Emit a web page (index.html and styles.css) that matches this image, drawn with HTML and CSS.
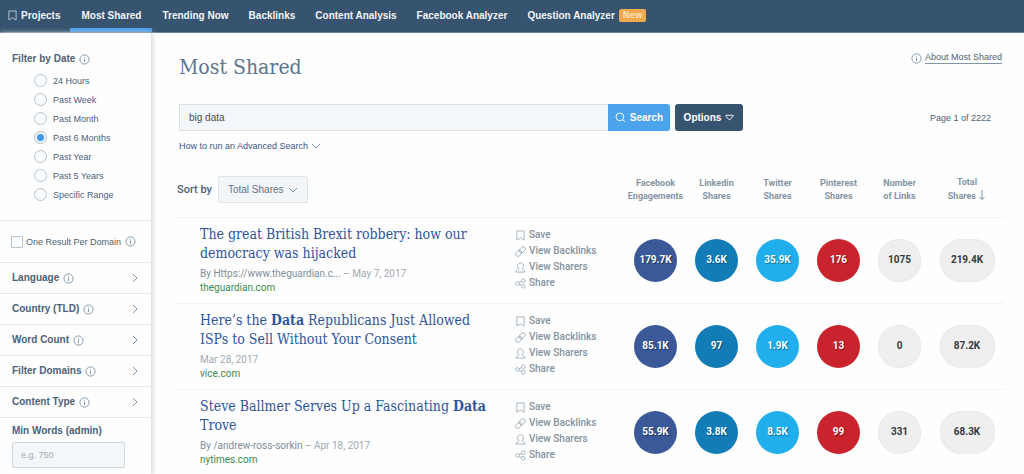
FILE: index.html
```html
<!DOCTYPE html>
<html lang="en">
<head>
<meta charset="utf-8">
<meta name="viewport" content="width=device-width, initial-scale=1">
<title>Most Shared</title>
<link rel="stylesheet" href="styles.css">
</head>
<body>
<svg class="sprite" aria-hidden="true">
  <symbol id="bookmark" viewBox="0 0 10 12"><path d="M1 1h8v10L5 8.500 1 11z"/></symbol>
  <symbol id="info" viewBox="0 0 12 12"><circle cx="6" cy="6" r="5"/><path d="M6 5v4M6 3v1"/></symbol>
  <symbol id="right" viewBox="0 0 6 10"><path d="M1 1l4 4-4 4"/></symbol>
  <symbol id="down" viewBox="0 0 10 6"><path d="M1 1l4 4 4-4"/></symbol>
  <symbol id="glass" viewBox="0 0 12 12"><circle cx="5.300" cy="5.300" r="4.200"/><path d="M8.500 8.500l2.500 2.500"/></symbol>
  <symbol id="triangle" viewBox="0 0 10 7"><path d="M1 1h8v1L5.500 6h-1L1 2z"/></symbol>
  <symbol id="arrow" viewBox="0 0 8 12"><path d="M4 1v9.500M1.500 8L4 10.500 6.500 8"/></symbol>
  <symbol id="chain" viewBox="0 0 12 12"><g transform="rotate(-45 6 6)"><rect x="-.5" y="3.600" width="7.500" height="4.800" rx="2.400"/><rect x="5" y="3.600" width="7.500" height="4.800" rx="2.400"/></g></symbol>
  <symbol id="person" viewBox="0 0 12 12"><path d="M4.500 7.500C1.800 5.300 2.200 1 6 1s4.200 4.300 1.500 6.500c0 1 3.500.8 3.500 3.500H1c0-2.700 3.500-2.500 3.500-3.500z"/></symbol>
  <symbol id="share" viewBox="0 0 12 12"><circle cx="2.800" cy="6" r="2"/><circle cx="9" cy="3" r="2"/><circle cx="9" cy="9" r="2"/><path d="M4.600 5.100l2.600-1.200M4.600 6.900l2.600 1.200"/></symbol>
</svg>

<nav class="nav">
  <a class="nav-item" href="#"><svg class="icon icon-mark"><use href="#bookmark"/></svg>Projects</a>
  <a class="nav-item active" href="#" aria-current="page">Most Shared</a>
  <a class="nav-item" href="#">Trending Now</a>
  <a class="nav-item" href="#">Backlinks</a>
  <a class="nav-item" href="#">Content Analysis</a>
  <a class="nav-item" href="#">Facebook Analyzer</a>
  <a class="nav-item" href="#">Question Analyzer <span class="new">New</span></a>
</nav>

<div class="layout">
  <aside class="sidebar">
    <fieldset class="dates">
      <legend class="heading">Filter by Date <svg class="icon"><use href="#info"/></svg></legend>
      <label class="choice"><input type="radio" name="date">24 Hours</label>
      <label class="choice"><input type="radio" name="date">Past Week</label>
      <label class="choice"><input type="radio" name="date">Past Month</label>
      <label class="choice"><input type="radio" name="date" checked>Past 6 Months</label>
      <label class="choice"><input type="radio" name="date">Past Year</label>
      <label class="choice"><input type="radio" name="date">Past 5 Years</label>
      <label class="choice"><input type="radio" name="date">Specific Range</label>
    </fieldset>
    <div class="single"><label class="check"><input type="checkbox">One Result Per Domain</label><svg class="icon"><use href="#info"/></svg></div>
    <button class="filter" type="button">Language <svg class="icon"><use href="#info"/></svg><svg class="icon chevron"><use href="#right"/></svg></button>
    <button class="filter" type="button">Country (TLD) <svg class="icon"><use href="#info"/></svg><svg class="icon chevron"><use href="#right"/></svg></button>
    <button class="filter" type="button">Word Count <svg class="icon"><use href="#info"/></svg><svg class="icon chevron"><use href="#right"/></svg></button>
    <button class="filter" type="button">Filter Domains <svg class="icon"><use href="#info"/></svg><svg class="icon chevron"><use href="#right"/></svg></button>
    <button class="filter" type="button">Content Type <svg class="icon"><use href="#info"/></svg><svg class="icon chevron"><use href="#right"/></svg></button>
    <div class="words">
      <label class="heading" for="min-words">Min Words (admin)</label>
      <input class="words-input" id="min-words" type="text" placeholder="e.g. 750">
    </div>
  </aside>

  <main class="main">
    <header class="top">
      <h1 class="title">Most Shared</h1>
      <a class="about" href="#"><svg class="icon"><use href="#info"/></svg><span class="about-text">About Most Shared</span></a>
    </header>
    <div class="tools">
      <form class="search">
        <input class="query" type="text" value="big data" aria-label="Search">
        <button class="go" type="button"><svg class="icon"><use href="#glass"/></svg>Search</button>
        <button class="options" type="button">Options <svg class="icon icon-triangle"><use href="#triangle"/></svg></button>
      </form>
      <span class="page">Page 1 of 2222</span>
    </div>
    <a class="advanced" href="#">How to run an Advanced Search <svg class="icon icon-down"><use href="#down"/></svg></a>

    <table class="results">
      <colgroup><col><col class="col-actions"><col class="col-count" span="5"><col class="col-total"></colgroup>
      <thead>
        <tr>
          <th colspan="2"><div class="sort"><label for="sort">Sort by</label><span class="select"><select id="sort"><option>Total Shares</option></select><svg class="icon icon-down"><use href="#down"/></svg></span></div></th>
          <th>Facebook<br>Engagements</th><th>Linkedin<br>Shares</th><th>Twitter<br>Shares</th><th>Pinterest<br>Shares</th><th>Number<br>of Links</th>
          <th>Total<br>Shares <svg class="icon icon-arrow"><use href="#arrow"/></svg></th>
        </tr>
      </thead>
      <tbody>
        <tr>
          <td class="article"><a class="headline" href="#">The great British Brexit robbery: how our democracy was hijacked</a><div class="meta"><span class="author">By Https://www.theguardian.c...</span> – May 7, 2017</div><a class="domain" href="#">theguardian.com</a></td>
          <td class="actions"><div class="action-list"><button type="button"><svg class="icon"><use href="#bookmark"/></svg>Save</button><button type="button"><svg class="icon"><use href="#chain"/></svg>View Backlinks</button><button type="button"><svg class="icon"><use href="#person"/></svg>View Sharers</button><button type="button"><svg class="icon"><use href="#share"/></svg>Share</button></div></td>
          <td><span class="count facebook">179.7K</span></td><td><span class="count linkedin">3.6K</span></td><td><span class="count twitter">35.9K</span></td><td><span class="count pinterest">176</span></td><td><span class="count">1075</span></td><td><span class="count total">219.4K</span></td>
        </tr>
        <tr>
          <td class="article"><a class="headline" href="#">Here’s the <b>Data</b> Republicans Just Allowed ISPs to Sell Without Your Consent</a><div class="meta">Mar 28, 2017</div><a class="domain" href="#">vice.com</a></td>
          <td class="actions"><div class="action-list"><button type="button"><svg class="icon"><use href="#bookmark"/></svg>Save</button><button type="button"><svg class="icon"><use href="#chain"/></svg>View Backlinks</button><button type="button"><svg class="icon"><use href="#person"/></svg>View Sharers</button><button type="button"><svg class="icon"><use href="#share"/></svg>Share</button></div></td>
          <td><span class="count facebook">85.1K</span></td><td><span class="count linkedin">97</span></td><td><span class="count twitter">1.9K</span></td><td><span class="count pinterest">13</span></td><td><span class="count">0</span></td><td><span class="count total">87.2K</span></td>
        </tr>
        <tr>
          <td class="article"><a class="headline" href="#">Steve Ballmer Serves Up a Fascinating <b>Data</b> Trove</a><div class="meta"><span class="author">By /andrew-ross-sorkin</span> – Apr 18, 2017</div><a class="domain" href="#">nytimes.com</a></td>
          <td class="actions"><div class="action-list"><button type="button"><svg class="icon"><use href="#bookmark"/></svg>Save</button><button type="button"><svg class="icon"><use href="#chain"/></svg>View Backlinks</button><button type="button"><svg class="icon"><use href="#person"/></svg>View Sharers</button><button type="button"><svg class="icon"><use href="#share"/></svg>Share</button></div></td>
          <td><span class="count facebook">55.9K</span></td><td><span class="count linkedin">3.8K</span></td><td><span class="count twitter">8.5K</span></td><td><span class="count pinterest">99</span></td><td><span class="count">331</span></td><td><span class="count total">68.3K</span></td>
        </tr>
      </tbody>
    </table>
  </main>
</div>
</body>
</html>
```

FILE: styles.css
```css
* { box-sizing: border-box; }
body {
  margin: 0;
  min-height: 100vh;
  display: flex;
  flex-direction: column;
  background: #fefefe;
  color: #4b6178;
  font: 10px/14px "Liberation Sans", Arial, sans-serif;
}
a { color: inherit; text-decoration: none; }
button, input, select { font: inherit; color: inherit; margin: 0; }
button { border: 0; padding: 0; background: none; cursor: pointer; }
.sprite { position: absolute; width: 0; height: 0; }
.icon { width: 11px; height: 11px; flex: none; fill: none; stroke: #7d93a8; stroke-width: 1; }
.icon-down { width: 10px; height: 6px; }

/* Top navigation */
.nav { display: flex; height: 33px; padding-left: 8px; background: #36546f; border-bottom: 1px solid #6f8497; color: #f2f5f7; font-weight: bold; }
.nav-item { display: flex; align-items: center; gap: 4px; padding: 0 10px; border-bottom: 4px solid transparent; border-top: 3px solid transparent; white-space: nowrap; }
.nav-item:first-child { padding-left: 0; }
.nav-item.active { padding: 0 11px; border-bottom-color: #4a9fe8; }
.nav .icon-mark { width: 9px; stroke: #c3ced8; }
.new { padding: 0 4px; border-radius: 2px; background: #efa951; color: #fff3dc; font: 9px/13px "DejaVu Sans", sans-serif; }

.layout { display: flex; flex: 1; }

/* Filters */
.sidebar { flex: none; width: 151px; box-shadow: 1px 0 5px #c9ced3; }
.heading { font-weight: bold; }
.dates { margin: 0; padding: 19px 0 16px 12px; border: 0; border-bottom: 1px solid #e6e9ec; }
.dates .heading { display: flex; align-items: center; gap: 4px; float: left; width: 100%; padding: 0; margin-bottom: 5px; }
.choice { display: flex; clear: both; align-items: center; height: 19px; padding-left: 22px; gap: 6px; font-size: 9px; }
.choice input { appearance: none; width: 13px; height: 13px; border: 1px solid #b3c2cf; border-radius: 50%; background: #fbfcfd; }
.choice input:checked { background: radial-gradient(circle, #3f9bea 3px, #eef4fa 4px); }
.single { display: flex; align-items: center; gap: 4px; height: 42px; padding-left: 11px; border-bottom: 1px solid #e6e9ec; font-size: 9px; white-space: nowrap; }
.check { display: flex; align-items: center; gap: 3px; }
.check input { appearance: none; width: 12px; height: 12px; border: 1px solid #b3c2cf; border-radius: 1px; background: #fff; }
.filter { display: flex; align-items: center; gap: 4px; width: 100%; height: 31px; padding: 0 13px 0 12px; border-bottom: 1px solid #e6e9ec; font-weight: bold; }
.filter .chevron { width: 6px; height: 10px; margin-left: auto; }
.words { display: flex; flex-direction: column; gap: 4px; padding: 6px 26px 5px 12px; }
.words-input { width: 100%; height: 26px; padding: 0 8px; border: 1px solid #cfd6dc; border-radius: 2px; background: #f4f7fa; font-size: 9px; }
.words-input::placeholder { color: #a3acb4; }

/* Search */
.main { flex: 1; min-width: 0; padding: 17px 20px 0 26px; }
.top { display: flex; justify-content: space-between; padding: 0 2px; }
.title { margin: 0; color: #5c7590; font: 300 21px/34px "Roboto Slab", "DejaVu Serif Condensed", "DejaVu Serif", serif; }
.about { display: flex; align-items: center; gap: 3px; height: 16px; font-size: 9px; }
.about-text { border-bottom: 1px solid #8296a9; line-height: 11px; }
.tools { display: flex; align-items: center; justify-content: space-between; margin-top: 20px; padding: 0 13px 0 2px; }
.search { display: flex; flex: 0 1 564px; height: 27px; }
.query { flex: 1; min-width: 0; padding: 0 9px; border: 1px solid #dce2e4; border-right: 0; background: #f3f7fb; color: #444f59; }
.go, .options { display: flex; align-items: center; justify-content: center; gap: 4px; border-radius: 3px; background: #36546f; color: #fff; font-weight: bold; }
.go { width: 62px; border-radius: 0 3px 3px 0; background: #4aa3eb; }
.go .icon, .options .icon { stroke: #fff; }
.options { width: 68px; margin-left: 5px; }
.icon-triangle { width: 9px; height: 7px; }
.page { font-size: 9px; }
.advanced { display: flex; align-items: center; gap: 3px; width: fit-content; margin: 8px 0 0 2px; color: #3b5585; font-size: 9px; }

/* Results */
.results { width: 100%; border-collapse: collapse; table-layout: fixed; font-family: Roboto, sans-serif; }
.col-actions { width: 110px; }
.col-count { width: 61px; }
.col-total { width: 74px; }
.results th { height: 64px; padding: 10px 0 0; color: #8594a3; font-size: 9px; font-weight: bold; line-height: 13px; text-align: center; }
.results td { height: 86px; padding: 0; border-top: 1px solid #f1f3f4; }
.sort { display: flex; align-items: center; gap: 6px; color: #4b6178; font-size: 11px; font-weight: 500; }
.select { display: flex; align-items: center; width: 90px; }
.select select { appearance: none; width: 100%; height: 27px; padding: 0 9px; border: 1px solid #dfe4e8; border-radius: 2px; background: #f3f6f9; color: #60748a; font: 10px/14px "Liberation Sans", sans-serif; }
.select .icon { margin-left: -20px; pointer-events: none; }
.icon-arrow { width: 8px; height: 12px; vertical-align: -2px; }
.results .article { padding: 7px 20px 8px 23px; vertical-align: top; }
.headline { display: block; margin-bottom: 4px; color: #30549a; font: 14px/19px "Roboto Slab", "DejaVu Serif Condensed", "DejaVu Serif", serif; }
.meta { color: #a0aab3; }
.author { color: #7f8d99; }
.domain { color: #398c4e; }
.results .actions { padding-bottom: 2px; vertical-align: middle; }
.action-list { display: flex; flex-direction: column; align-items: flex-start; }
.action-list button { display: flex; align-items: center; gap: 3px; height: 16px; color: #84929f; font-weight: 500; }
.action-list .icon { stroke: #a0b0be; }
.count { display: flex; align-items: center; justify-content: center; width: 43px; height: 43px; margin: 0 auto; border-radius: 22px; background: #efefef; box-shadow: inset 0 0 1px #cfcfcf; color: #353a40; font-weight: bold; }
.facebook, .linkedin, .twitter, .pinterest { color: #fff; box-shadow: none; text-shadow: 1px 1px 1px #00000066; }
.facebook { background: #3b5998; }
.linkedin { background: #127cb7; }
.twitter { background: #20aeed; }
.pinterest { background: #c9232d; }
.total { width: 55px; }
```
